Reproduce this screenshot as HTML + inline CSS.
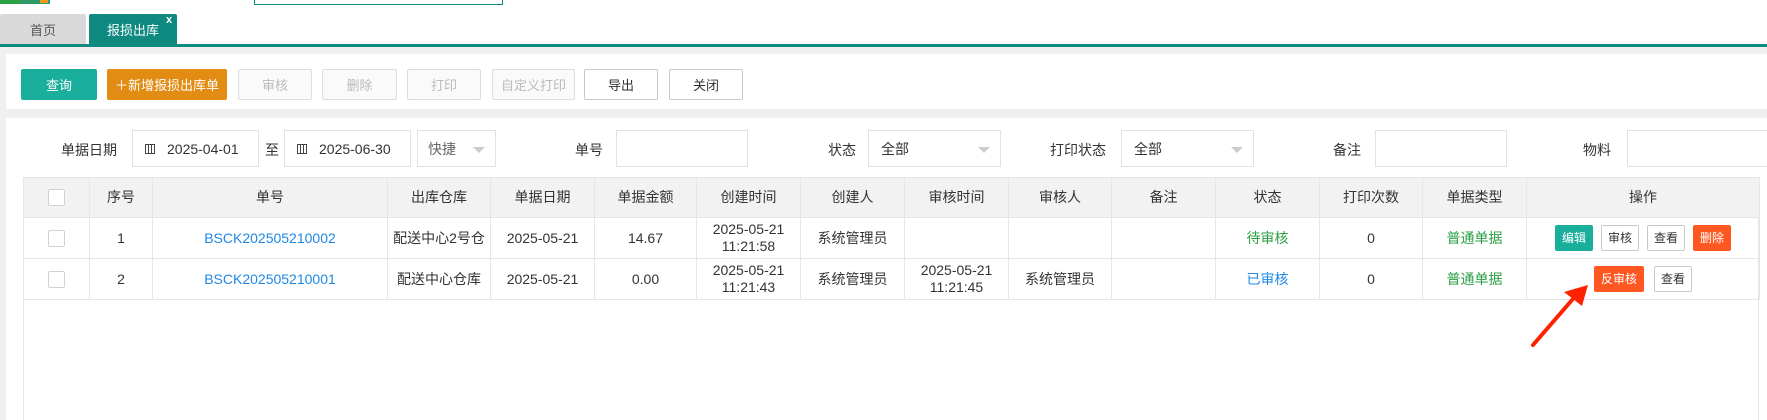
<!DOCTYPE html>
<html><head><meta charset="utf-8"><style>
*{box-sizing:border-box;margin:0;padding:0}
html{overflow:hidden;width:1767px;height:420px}
body{width:1767px;height:420px;overflow:hidden;background:#f0f0f0;font-family:"Liberation Sans","Noto Sans CJK SC",sans-serif;font-size:13px;color:#333;position:relative}
.a{position:absolute}
.top{left:0;top:0;width:1767px;height:44px;background:#fff}
.btn{position:absolute;top:69px;height:31px;border:1px solid #ddd;border-radius:2px;background:#fafafa;color:#bbb;display:flex;align-items:center;justify-content:center;font-size:13px}
.lbl{position:absolute;top:140px;font-size:14px;color:#333}
.inp{position:absolute;top:130px;height:37px;border:1px solid #e2e2e2;background:#fff;display:flex;align-items:center;font-size:14px}
.cal{display:inline-block;width:10px;height:10px;margin:0 12px 0 12px;background:repeating-linear-gradient(90deg,#444 0 1px,transparent 1px 3px),#fff;border-top:1px solid #444;border-bottom:1px solid #444}
.tri{position:absolute;right:10px;top:16px;border-left:6px solid transparent;border-right:6px solid transparent;border-top:6px solid #ccc}
table{position:absolute;left:23px;top:177px;border-collapse:collapse;table-layout:fixed;font-size:14px}
td,th{border:1px solid #e6e6e6;text-align:center;height:41px;padding:0;font-weight:normal;line-height:17px}
th{background:#f2f2f2;height:40px;color:#333}
.cb{display:inline-block;width:17px;height:17px;border:1px solid #d2d2d2;border-radius:2px;background:#fff;vertical-align:middle}
.lk{color:#1e88e5}.g{color:#2aa043}.b{color:#1e88e5}
.ob{display:inline-block;height:26px;line-height:24px;padding:0 6px;border:1px solid #c9c9c9;border-radius:2px;font-size:12px;margin:0 4px;background:#fff;color:#333;vertical-align:middle}
</style></head><body>
<div class="a top"></div>
<div class="a" style="left:0;top:0;width:20px;height:4px;background:#2aa043"></div>
<div class="a" style="left:20px;top:0;width:30px;height:4px;background:#2e9a6a"></div>
<div class="a" style="left:40px;top:0;width:8px;height:3px;background:#f29a1f"></div>
<div class="a" style="left:254px;top:-2px;width:249px;height:7px;border:1px solid #0e8a80"></div>
<div class="a" style="left:0;top:14px;width:86px;height:30px;background:#d9d9d9;color:#555;font-size:13px;display:flex;align-items:center;justify-content:center;border-radius:2px 2px 0 0">首页</div>
<div class="a" style="left:89px;top:14px;width:88px;height:30px;background:#0e8a80;color:#fff;font-size:13px;display:flex;align-items:center;justify-content:center;border-radius:2px 2px 0 0">报损出库</div>
<div class="a" style="left:166px;top:14px;color:#fff;font-size:11px;font-weight:bold">x</div>
<div class="a" style="left:0;top:44px;width:1767px;height:3px;background:#0e8a80"></div>
<div class="a" style="left:6px;top:54px;width:1761px;height:55px;background:#fff"></div>
<div class="btn" style="left:21px;width:76px;background:#1aae9c;border-color:#1aae9c;color:#fff">查询</div>
<div class="btn" style="left:107px;width:120px;background:#e28c14;border-color:#e28c14;color:#fff">＋新增报损出库单</div>
<div class="btn" style="left:238px;width:74px">审核</div>
<div class="btn" style="left:322px;width:75px">删除</div>
<div class="btn" style="left:407px;width:74px">打印</div>
<div class="btn" style="left:492px;width:83px">自定义打印</div>
<div class="btn" style="left:584px;width:74px;background:#fff;border-color:#c9c9c9;color:#333">导出</div>
<div class="btn" style="left:669px;width:74px;background:#fff;border-color:#c9c9c9;color:#333">关闭</div>
<div class="a" style="left:6px;top:118px;width:1761px;height:302px;background:#fff"></div>
<div class="lbl" style="left:61px">单据日期</div>
<div class="inp" style="left:132px;width:127px"><span class="cal"></span>2025-04-01</div>
<div class="lbl" style="left:265px">至</div>
<div class="inp" style="left:284px;width:127px"><span class="cal"></span>2025-06-30</div>
<div class="inp" style="left:417px;width:79px;color:#666;padding-left:10px">快捷<span class="tri"></span></div>
<div class="lbl" style="left:575px">单号</div>
<div class="inp" style="left:616px;width:132px"></div>
<div class="lbl" style="left:828px">状态</div>
<div class="inp" style="left:868px;width:133px;padding-left:12px">全部<span class="tri"></span></div>
<div class="lbl" style="left:1050px">打印状态</div>
<div class="inp" style="left:1121px;width:133px;padding-left:12px">全部<span class="tri"></span></div>
<div class="lbl" style="left:1333px">备注</div>
<div class="inp" style="left:1375px;width:132px"></div>
<div class="lbl" style="left:1583px">物料</div>
<div class="inp" style="left:1627px;width:140px;border-right:none"></div>
<div class="a" style="left:23px;top:217px;width:1736px;height:210px;border:1px solid #e6e6e6"></div>
<table>
<colgroup><col style="width:66px"><col style="width:63px"><col style="width:235px"><col style="width:103px"><col style="width:104px"><col style="width:102px"><col style="width:104px"><col style="width:104px"><col style="width:104px"><col style="width:103px"><col style="width:104px"><col style="width:104px"><col style="width:103px"><col style="width:104px"><col style="width:233px"></colgroup>
<tr><th><span class="cb"></span></th><th>序号</th><th>单号</th><th>出库仓库</th><th>单据日期</th><th>单据金额</th><th>创建时间</th><th>创建人</th><th>审核时间</th><th>审核人</th><th>备注</th><th>状态</th><th>打印次数</th><th>单据类型</th><th>操作</th></tr>
<tr><td><span class="cb"></span></td><td>1</td><td class="lk">BSCK202505210002</td><td>配送中心2号仓</td><td>2025-05-21</td><td>14.67</td><td>2025-05-21<br>11:21:58</td><td>系统管理员</td><td></td><td></td><td></td><td class="g">待审核</td><td>0</td><td class="g">普通单据</td><td><span class="ob" style="background:#1aae9c;border-color:#1aae9c;color:#fff">编辑</span><span class="ob">审核</span><span class="ob">查看</span><span class="ob" style="background:#ff5722;border-color:#ff5722;color:#fff">删除</span></td></tr>
<tr><td><span class="cb"></span></td><td>2</td><td class="lk">BSCK202505210001</td><td>配送中心仓库</td><td>2025-05-21</td><td>0.00</td><td>2025-05-21<br>11:21:43</td><td>系统管理员</td><td>2025-05-21<br>11:21:45</td><td>系统管理员</td><td></td><td class="b">已审核</td><td>0</td><td class="g">普通单据</td><td><span class="ob" style="background:#ff5722;border-color:#ff5722;color:#fff;margin-right:6px">反审核</span><span class="ob">查看</span></td></tr>
</table>
<svg class="a" style="left:0;top:0" width="1767" height="420"><line x1="1533" y1="345" x2="1572" y2="300" stroke="#ff2200" stroke-width="4" stroke-linecap="round"/><polygon points="1588,285 1564,292 1582,306" fill="#ff2200"/></svg>
</body></html>
